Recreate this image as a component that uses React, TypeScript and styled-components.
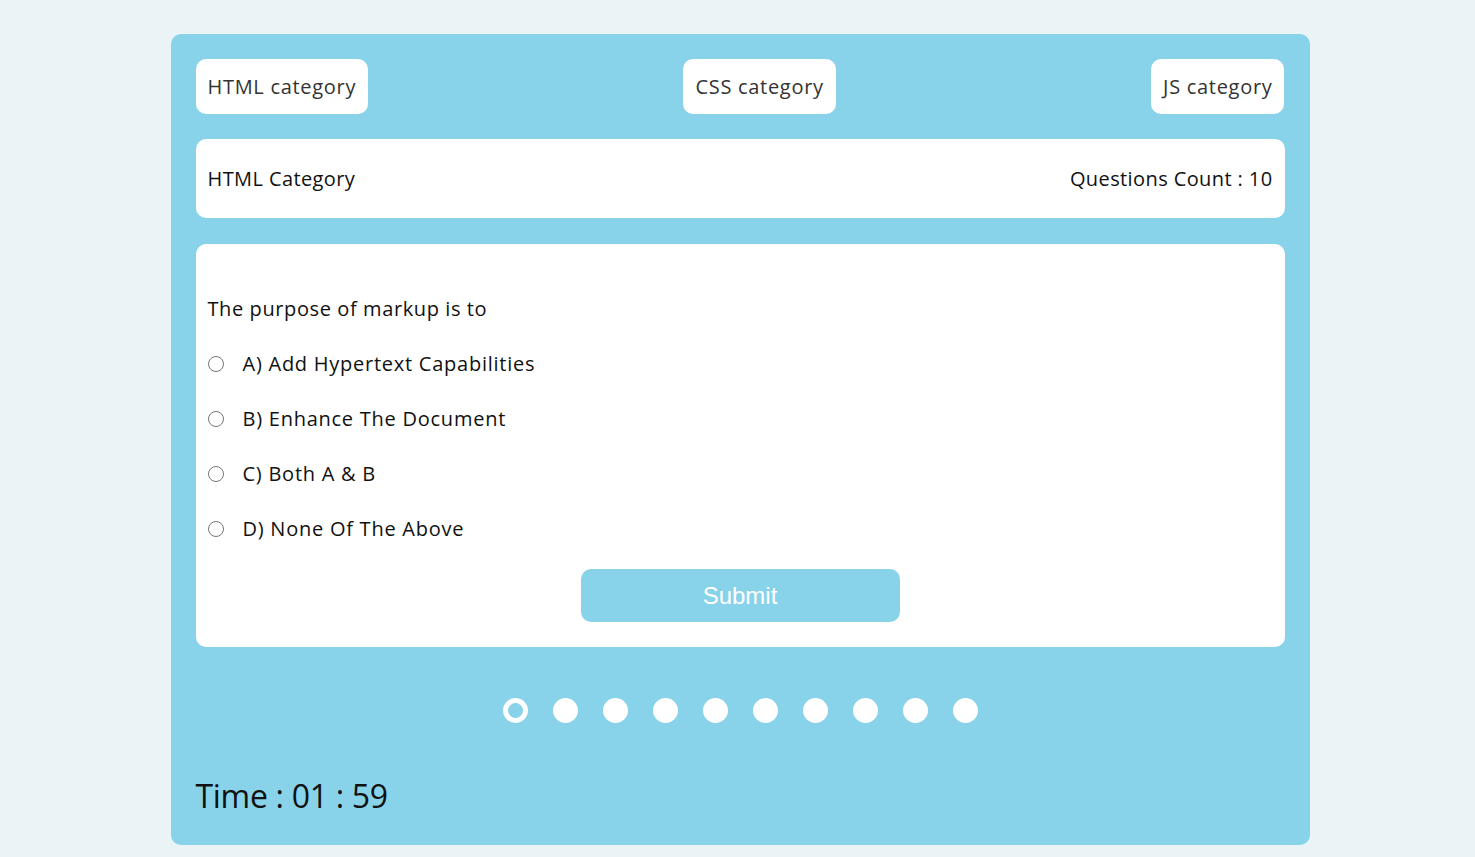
import React from "react";
import styled, { createGlobalStyle } from "styled-components";

const Global = createGlobalStyle`
  html, body { margin: 0; padding: 0; }
  body {
    background: #eaf3f6;
    font-family: "Open Sans", "Noto Sans", sans-serif;
  }
`;

const Page = styled.div`
  width: 1475px;
  height: 857px;
  padding-top: 34px;
  box-sizing: border-box;
  display: flex;
  justify-content: center;
`;

const Card = styled.div`
  width: 1139px;
  height: 811px;
  box-sizing: border-box;
  margin-left: 5px;
  background: #88d3ea;
  border-radius: 10px;
  padding: 25px;
  display: flex;
  flex-direction: column;
`;

const Tabs = styled.div`
  display: flex;
  justify-content: space-between;
  height: 55px;
`;

const Tab = styled.button`
  height: 55px;
  border: none;
  background: #fff;
  border-radius: 10px;
  padding: 0 12px;
  font-family: "Open Sans", "Noto Sans", sans-serif;
  font-size: 20px;
  letter-spacing: 0.7px;
  color: #333;
  cursor: pointer;
`;

const InfoBar = styled.div`
  margin-top: 25px;
  height: 79px;
  background: #fff;
  border-radius: 10px;
  padding: 0 12px;
  display: flex;
  align-items: center;
  justify-content: space-between;
  font-size: 20px;
  letter-spacing: 0.4px;
  color: #111;
`;

const QuestionBox = styled.div`
  margin-top: 26px;
  height: 403px;
  box-sizing: border-box;
  background: #fff;
  border-radius: 10px;
  padding: 50px 12px 25px;
  display: flex;
  flex-direction: column;
`;

const Question = styled.div`
  font-size: 20px;
  line-height: 30px;
  letter-spacing: 0.6px;
  color: #111;
`;

const Options = styled.div`
  margin-top: 12px;
  display: flex;
  flex-direction: column;
`;

const Option = styled.label`
  height: 55px;
  display: flex;
  align-items: center;
  gap: 19px;
  font-size: 20px;
  letter-spacing: 0.75px;
  color: #111;
  cursor: pointer;
`;

const Radio = styled.input`
  margin: 0;
  width: 16px;
  height: 16px;
`;

const Submit = styled.button`
  margin: 13px auto 0;
  width: 319px;
  height: 53px;
  border: none;
  border-radius: 10px;
  background: #88d3ea;
  color: #fff;
  font-family: "Liberation Sans", Arial, sans-serif;
  font-size: 24px;
  cursor: pointer;
`;

const Dots = styled.div`
  margin-top: 51px;
  display: flex;
  justify-content: center;
  gap: 25px;
`;

const Dot = styled.span<{ $active?: boolean }>`
  width: 25px;
  height: 25px;
  border-radius: 50%;
  box-sizing: border-box;
  background: ${(p) => (p.$active ? "transparent" : "#fff")};
  border: ${(p) => (p.$active ? "5px solid #fff" : "none")};
`;

const Timer = styled.div`
  margin-top: 53px;
  font-size: 32px;
  line-height: 40px;
  letter-spacing: -0.3px;
  color: #111;
`;

const options = [
  "A) Add Hypertext Capabilities",
  "B) Enhance The Document",
  "C) Both A & B",
  "D) None Of The Above",
];

export default function App() {
  return (
    <>
      <Global />
      <Page>
        <Card>
          <Tabs>
            <Tab>HTML category</Tab>
            <Tab>CSS category</Tab>
            <Tab>JS category</Tab>
          </Tabs>
          <InfoBar>
            <span>HTML Category</span>
            <span>Questions Count : 10</span>
          </InfoBar>
          <QuestionBox>
            <Question>The purpose of markup is to</Question>
            <Options>
              {options.map((o) => (
                <Option key={o}>
                  <Radio type="radio" name="answer" />
                  {o}
                </Option>
              ))}
            </Options>
            <Submit>Submit</Submit>
          </QuestionBox>
          <Dots>
            {Array.from({ length: 10 }).map((_, i) => (
              <Dot key={i} $active={i === 0} />
            ))}
          </Dots>
          <Timer>Time : 01 : 59</Timer>
        </Card>
      </Page>
    </>
  );
}
